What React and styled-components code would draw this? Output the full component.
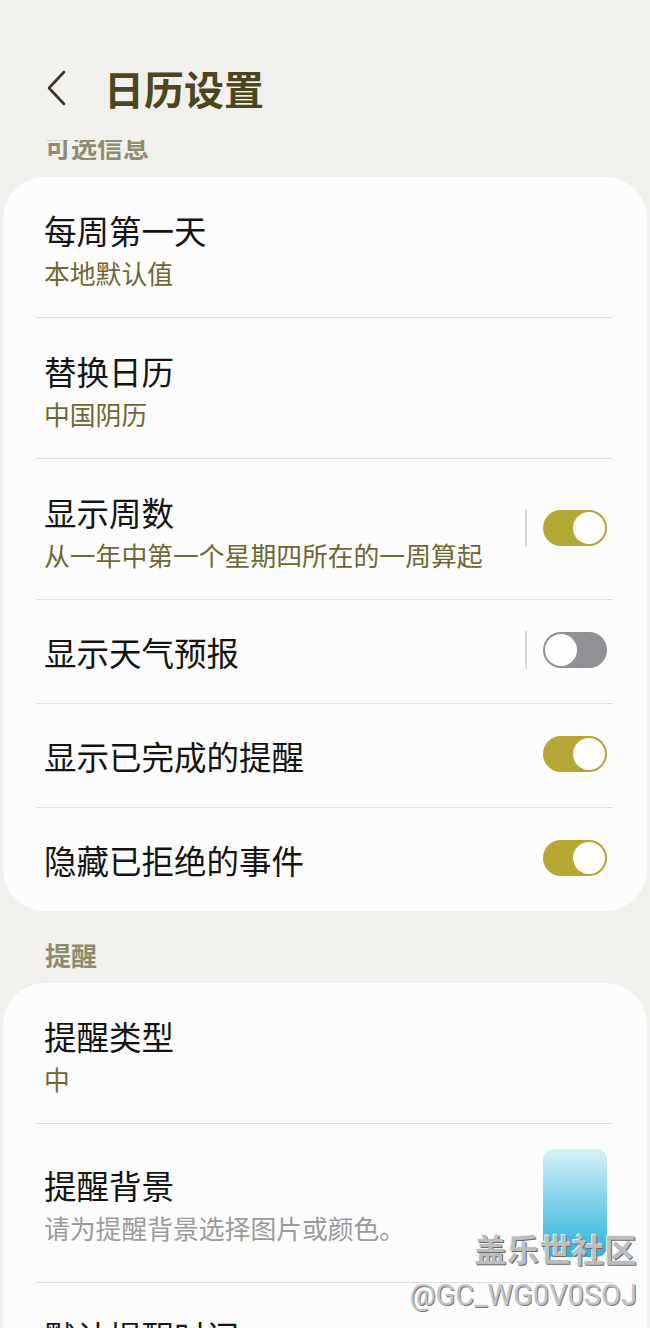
import React from "react";
import styled, { createGlobalStyle } from "styled-components";

const GlobalStyle = createGlobalStyle`
  html, body {
    margin: 0;
    padding: 0;
    background: #f2f0ec;
  }
  body {
    font-family: "Noto Sans CJK SC", "Noto Sans", Roboto, sans-serif;
    width: 650px;
    height: 1328px;
    overflow: hidden;
  }
`;

const Page = styled.div`
  position: relative;
  width: 650px;
  height: 1328px;
  overflow: hidden;
  background: #f2f0ec;
`;

const Header = styled.div`
  display: flex;
  align-items: center;
  height: 56px;
  padding: 60px 0 0 46px;
`;

const BackButton = styled.button`
  display: flex;
  align-items: center;
  justify-content: center;
  width: 22px;
  height: 40px;
  padding: 0;
  border: none;
  background: none;
  margin-right: 36px;
`;

const Title = styled.h1`
  margin: 0;
  font-size: 40px;
  line-height: 56px;
  font-weight: 700;
  color: #4b461e;
`;

const LabelBox = styled.div`
  height: ${(p) => p.$h}px;
  margin-top: ${(p) => p.$top}px;
  padding-left: 45px;
  overflow: ${(p) => (p.$clip ? "hidden" : "visible")};
`;

const SectionLabel = styled.div`
  font-size: 26px;
  line-height: 30px;
  font-weight: 700;
  color: #8f8c70;
  margin-top: ${(p) => p.$shift || 0}px;
`;

const Card = styled.div`
  margin: ${(p) => p.$top}px 3px 0;
  background: #fcfcfc;
  border-radius: 42px;
  overflow: hidden;
`;

const Row = styled.div`
  display: flex;
  align-items: center;
  padding: ${(p) => (p.$tall ? "25px 40px 25px 41px" : p.$sub ? "33px 40px 27px 41px" : "32px 40px 31px 41px")};
  height: ${(p) => (p.$tall ? 108 : p.$sub ? 80 : 40)}px;
`;

const Divider = styled.div`
  height: 1px;
  margin: 0 34px 0 33px;
  background: #dedede;
`;

const Texts = styled.div`
  flex: 1;
  display: flex;
  flex-direction: column;
  align-self: ${(p) => (p.$center ? "center" : "flex-start")};
  margin-top: ${(p) => p.$nudge || 0}px;
`;

const RowTitle = styled.div`
  font-size: 32.5px;
  line-height: 40px;
  color: #141414;
`;

const RowSub = styled.div`
  margin-top: 6px;
  font-size: 25.8px;
  line-height: 34px;
  color: ${(p) => (p.$muted ? "#9a9a9a" : "#6d6833")};
`;

const Separator = styled.div`
  width: 2px;
  height: 38px;
  margin-right: 16px;
  background: #d6d6d6;
`;

const Track = styled.div`
  display: flex;
  justify-content: ${(p) => (p.$on ? "flex-end" : "flex-start")};
  align-items: center;
  box-sizing: border-box;
  width: 64px;
  height: 36px;
  padding: 2px;
  border-radius: 18px;
  background: ${(p) => (p.$on ? "#b4a734" : "#909095")};
`;

const Thumb = styled.div`
  width: 32px;
  height: 32px;
  border-radius: 50%;
  background: #fefefe;
`;

const Controls = styled.div`
  display: flex;
  align-items: center;
  margin-top: ${(p) => p.$lift || 0}px;
`;

const Swatch = styled.div`
  width: 64px;
  height: 108px;
  border-radius: 10px;
  background: linear-gradient(180deg, #d6f2f6 0%, #86d4ec 45%, #2db1e0 100%);
`;

const Watermark = styled.div`
  position: absolute;
  right: 13px;
  top: 1228px;
  display: flex;
  flex-direction: column;
  align-items: flex-end;
  pointer-events: none;
`;

const MarkName = styled.div`
  font-size: 32px;
  line-height: 40px;
  font-weight: 700;
  color: #bdbdbd;
  text-shadow: 1px 1px 0 #6a6a6a, -1px -1px 0 #f0f0f0;
  letter-spacing: 0.5px;
`;

const MarkId = styled.div`
  margin-top: 9px;
  font-family: Roboto, "Liberation Sans", sans-serif;
  font-size: 29px;
  line-height: 36px;
  color: #c4c4c4;
  text-shadow: 1px 1px 0 #7a7a7a;
`;

const Toggle = ({ on, sep, lift }) => (
  <Controls $lift={lift}>
    {sep && <Separator />}
    <Track $on={on}>
      <Thumb />
    </Track>
  </Controls>
);

const Chevron = () => (
  <svg width="22" height="40" viewBox="0 0 22 40">
    <polyline
      points="18,4 3,20 18,36"
      fill="none"
      stroke="#3a3826"
      strokeWidth="2.6"
      strokeLinecap="round"
      strokeLinejoin="round"
    />
  </svg>
);

const general = [
  { title: "每周第一天", sub: "本地默认值" },
  { title: "替换日历", sub: "中国阴历" },
  { title: "显示周数", sub: "从一年中第一个星期四所在的一周算起", toggle: true, on: true, sep: true },
  { title: "显示天气预报", toggle: true, on: false, sep: true },
  { title: "显示已完成的提醒", toggle: true, on: true },
  { title: "隐藏已拒绝的事件", toggle: true, on: true },
];

const SettingRow = ({ item }) => (
  <Row $sub={!!item.sub}>
    <Texts $center={!item.sub}>
      <RowTitle>{item.title}</RowTitle>
      {item.sub && <RowSub>{item.sub}</RowSub>}
    </Texts>
    {item.toggle && <Toggle on={item.on} sep={item.sep} lift={item.sub ? -8 : -4} />}
  </Row>
);

export default function App() {
  return (
    <Page>
      <GlobalStyle />
      <Header>
        <BackButton>
          <Chevron />
        </BackButton>
        <Title>日历设置</Title>
      </Header>

      <LabelBox $top={24} $h={20} $clip>
        <SectionLabel $shift={-8}>可选信息</SectionLabel>
      </LabelBox>

      <Card $top={17}>
        {general.map((item, i) => (
          <React.Fragment key={item.title}>
            {i > 0 && <Divider />}
            <SettingRow item={item} />
          </React.Fragment>
        ))}
      </Card>

      <LabelBox $top={29} $h={34}>
        <SectionLabel>提醒</SectionLabel>
      </LabelBox>

      <Card $top={9}>
        <SettingRow item={{ title: "提醒类型", sub: "中" }} />
        <Divider />
        <Row $tall>
          <Texts $center $nudge={4}>
            <RowTitle>提醒背景</RowTitle>
            <RowSub $muted>请为提醒背景选择图片或颜色。</RowSub>
          </Texts>
          <Swatch />
        </Row>
        <Divider />
        <SettingRow item={{ title: "默认提醒时间", sub: "事件开始前10分钟" }} />
      </Card>

      <Watermark>
        <MarkName>盖乐世社区</MarkName>
        <MarkId>@GC_WG0V0SOJ</MarkId>
      </Watermark>
    </Page>
  );
}
